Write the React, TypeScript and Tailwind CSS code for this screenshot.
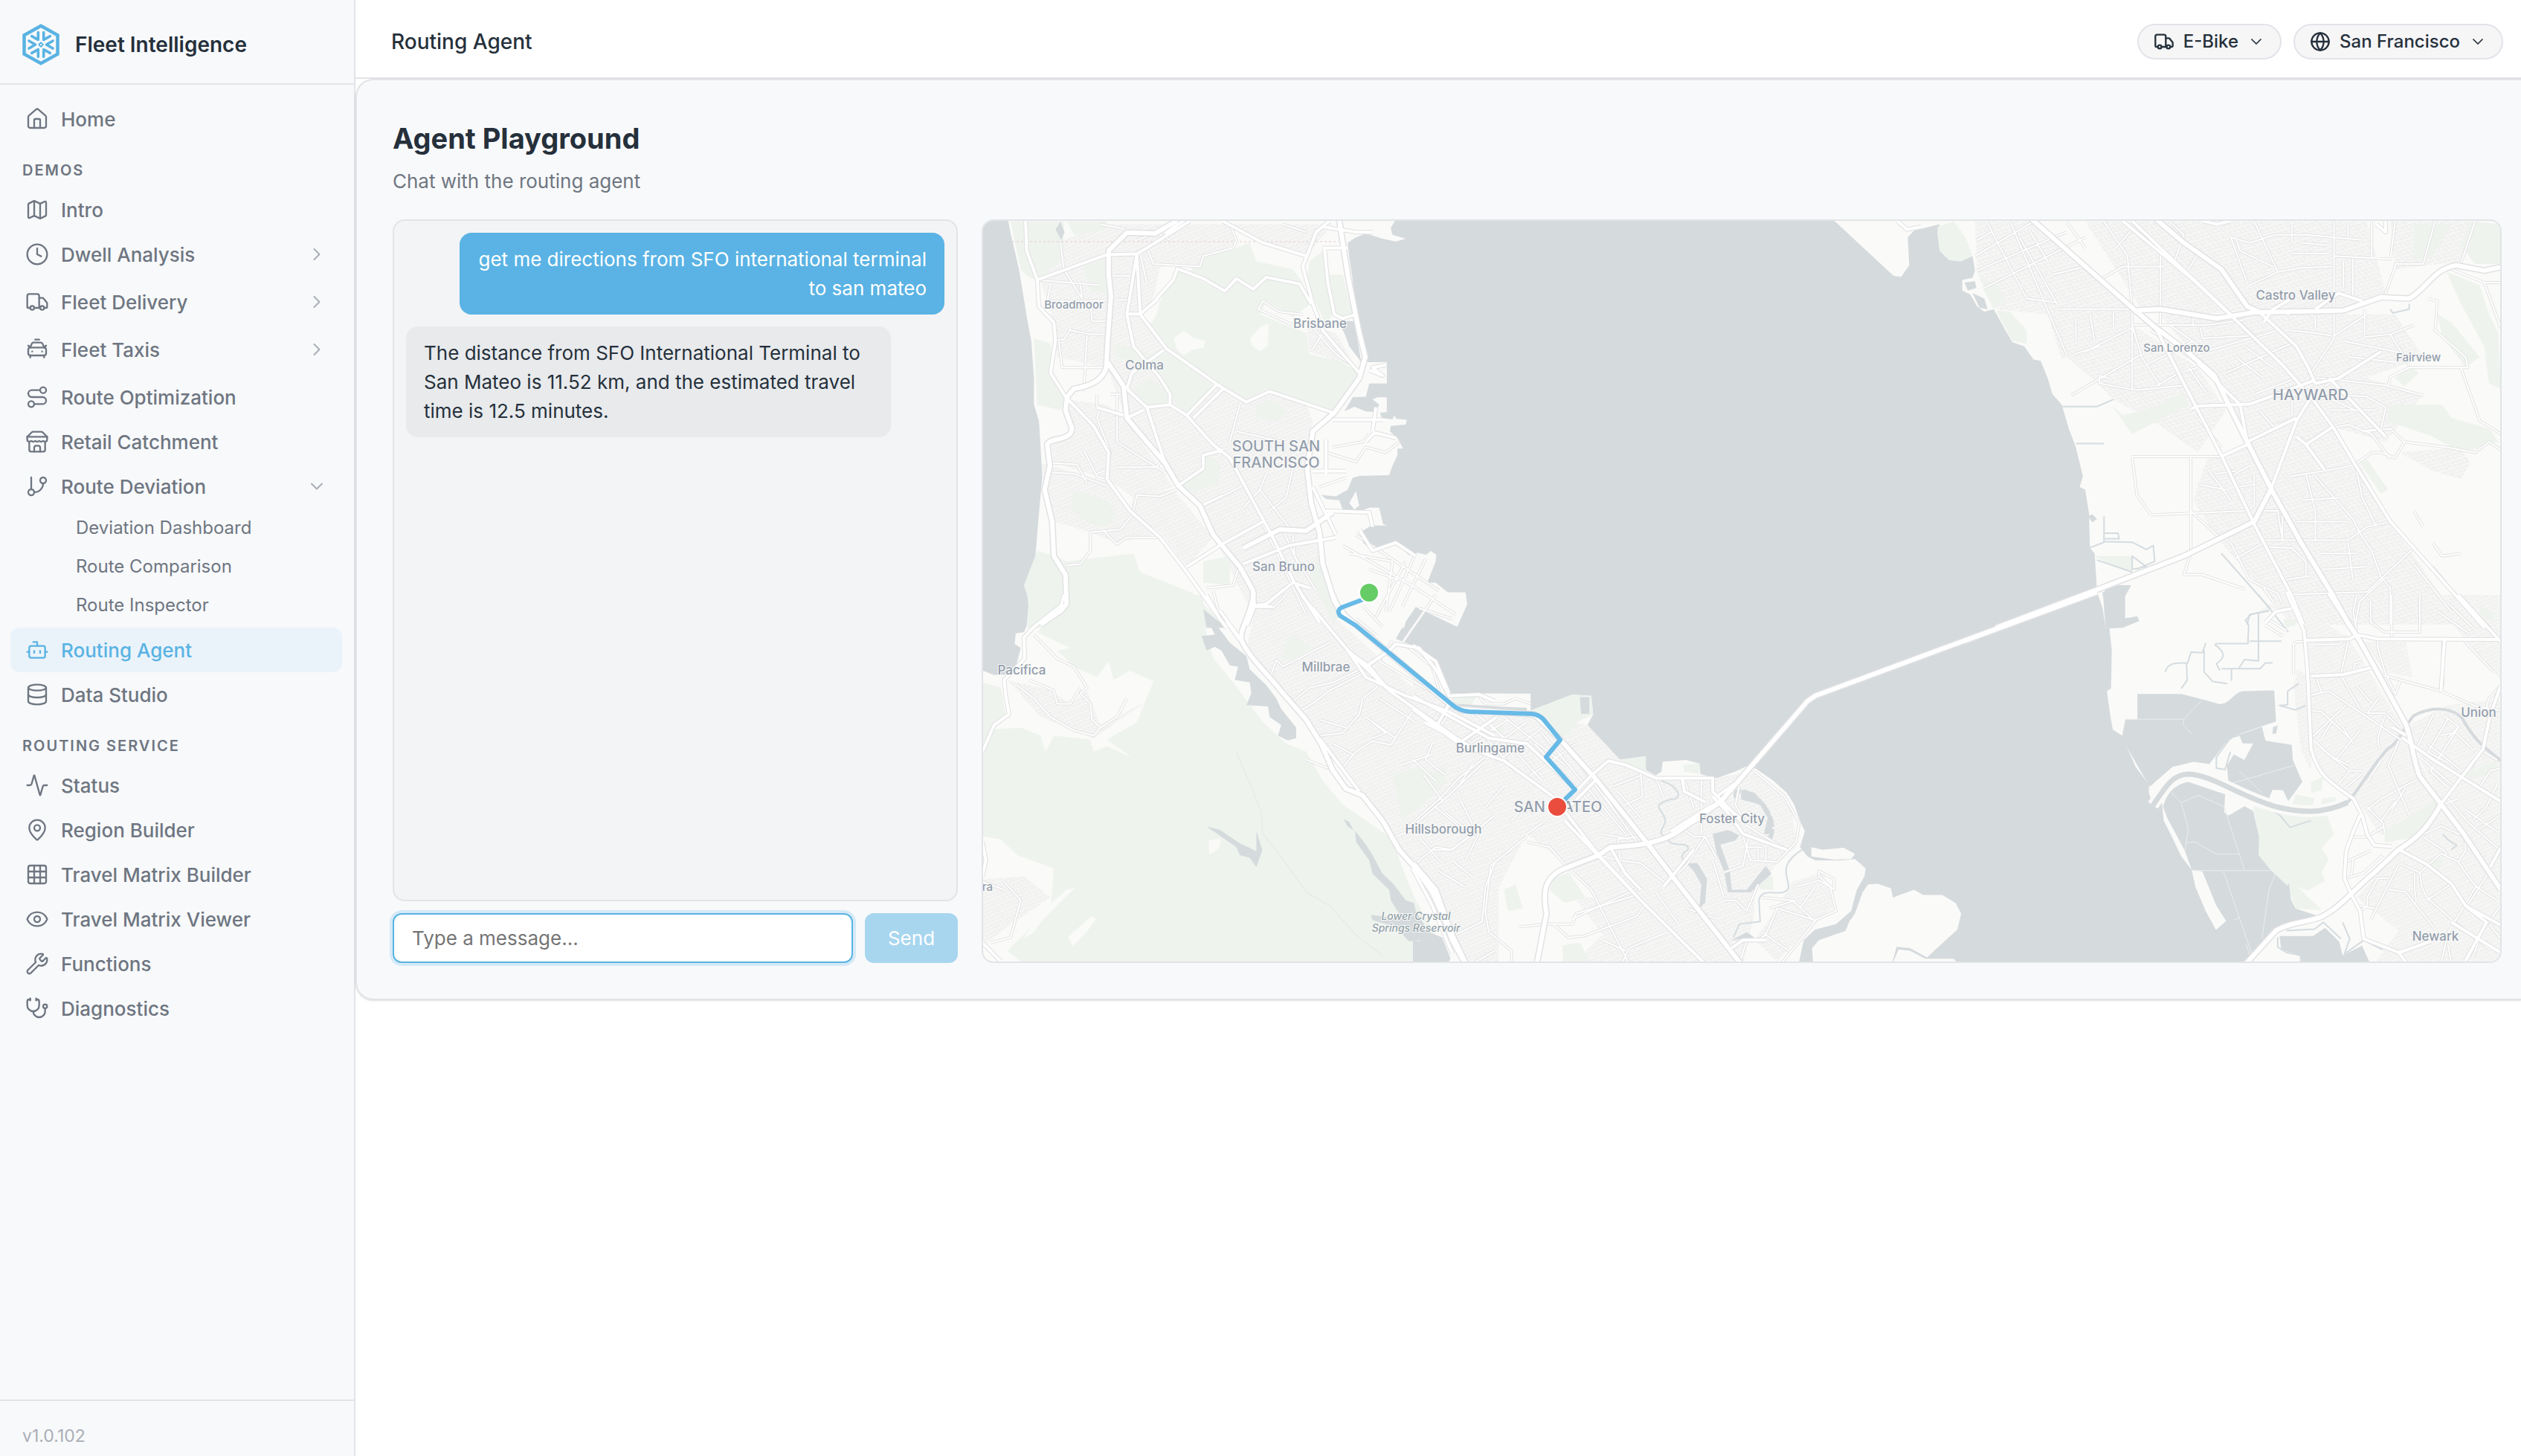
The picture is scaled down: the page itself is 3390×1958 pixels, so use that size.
import { useState, type FormEvent } from 'react';
import {
  Activity,
  Bot,
  CarTaxiFront,
  ChevronDown,
  ChevronRight,
  Clock,
  Database,
  Eye,
  Globe,
  Grid3x3,
  House,
  Map as MapIcon,
  MapPin,
  Route,
  Stethoscope,
  Truck,
  Wrench,
  createLucideIcon,
  type LucideIcon,
} from 'lucide-react';

interface NavItem {
  label: string;
  icon: LucideIcon;
  group?: boolean;
  children?: string[];
}

interface Message {
  role: 'user' | 'assistant';
  text: string;
}

const StoreFront = createLucideIcon('store-front', [
  ['path', { d: 'm2 7 4.41-4.41A2 2 0 0 1 7.83 2h8.34a2 2 0 0 1 1.42.59L22 7', key: 'roof' }],
  ['path', { d: 'M4 12v8a2 2 0 0 0 2 2h12a2 2 0 0 0 2-2v-8', key: 'walls' }],
  ['path', { d: 'M15 22v-4a2 2 0 0 0-2-2h-2a2 2 0 0 0-2 2v4', key: 'door' }],
  ['path', { d: 'M2 7h20', key: 'ledge' }],
  [
    'path',
    {
      d: 'M22 7v3a2 2 0 0 1-2 2a2.7 2.7 0 0 1-1.59-.63.7.7 0 0 0-.82 0A2.7 2.7 0 0 1 16 12a2.7 2.7 0 0 1-1.59-.63.7.7 0 0 0-.82 0A2.7 2.7 0 0 1 12 12a2.7 2.7 0 0 1-1.59-.63.7.7 0 0 0-.82 0A2.7 2.7 0 0 1 8 12a2.7 2.7 0 0 1-1.59-.63.7.7 0 0 0-.82 0A2.7 2.7 0 0 1 4 12a2 2 0 0 1-2-2V7',
      key: 'awning',
    },
  ],
]);

const Branch = createLucideIcon('branch', [
  ['path', { d: 'M6 3v12', key: 'trunk' }],
  ['circle', { cx: '18', cy: '6', r: '3', key: 'top' }],
  ['circle', { cx: '6', cy: '18', r: '3', key: 'bottom' }],
  ['path', { d: 'M18 9a9 9 0 0 1-9 9', key: 'curve' }],
]);

const demos: NavItem[] = [
  { label: 'Intro', icon: MapIcon },
  { label: 'Dwell Analysis', icon: Clock, group: true },
  { label: 'Fleet Delivery', icon: Truck, group: true },
  { label: 'Fleet Taxis', icon: CarTaxiFront, group: true },
  { label: 'Route Optimization', icon: Route },
  { label: 'Retail Catchment', icon: StoreFront },
  {
    label: 'Route Deviation',
    icon: Branch,
    group: true,
    children: ['Deviation Dashboard', 'Route Comparison', 'Route Inspector'],
  },
  { label: 'Routing Agent', icon: Bot },
  { label: 'Data Studio', icon: Database },
];

const services: NavItem[] = [
  { label: 'Status', icon: Activity },
  { label: 'Region Builder', icon: MapPin },
  { label: 'Travel Matrix Builder', icon: Grid3x3 },
  { label: 'Travel Matrix Viewer', icon: Eye },
  { label: 'Functions', icon: Wrench },
  { label: 'Diagnostics', icon: Stethoscope },
];

const initialMessages: Message[] = [
  { role: 'user', text: 'get me directions from SFO international terminal to san mateo' },
  {
    role: 'assistant',
    text: 'The distance from SFO International Terminal to San Mateo is 11.52 km, and the estimated travel time is 12.5 minutes.',
  },
];

function Logo() {
  return (
    <svg viewBox="0 0 56 56" className="size-14 shrink-0 text-[#59b3e3]" fill="none" stroke="currentColor" aria-hidden="true">
      <path d="M28 2.8 50.5 15.3V40.7L28 53.2 5.5 40.7V15.3Z" strokeWidth="4.5" />
      {[0, 60, 120, 180, 240, 300].map((angle) => (
        <path
          key={angle}
          d="M12 23 20.5 28 12 33"
          strokeWidth="3.6"
          strokeLinecap="round"
          strokeLinejoin="round"
          transform={`rotate(${angle} 28 28)`}
        />
      ))}
      <path d="M28 25.2 30.8 28 28 30.8 25.2 28Z" strokeWidth="1.8" strokeLinejoin="round" />
    </svg>
  );
}

function NavRow({ item, active }: { item: NavItem; active?: boolean }) {
  const Icon = item.icon;
  const [open, setOpen] = useState(Boolean(item.children));
  const Chevron = open ? ChevronDown : ChevronRight;

  if (item.group) {
    return (
      <div className="mb-1">
        <button
          type="button"
          aria-expanded={open}
          onClick={() => setOpen(!open)}
          className="flex h-[60px] w-full items-center gap-4 rounded-xl px-5 text-left text-[26px] font-medium text-[#6e7681]"
        >
          <Icon size={32} strokeWidth={1.75} className="shrink-0" />
          <span className="flex-1">{item.label}</span>
          <Chevron size={28} strokeWidth={1.75} className="shrink-0 text-[#a9aeb6]" />
        </button>
        {open &&
          item.children?.map((child) => (
            <a key={child} href="#" className="flex h-[52px] items-center pl-[88px] text-2xl text-[#6e7681]">
              {child}
            </a>
          ))}
      </div>
    );
  }

  return (
    <a
      href="#"
      aria-current={active ? 'page' : undefined}
      className={`flex h-[60px] items-center gap-4 rounded-xl px-5 text-[26px] font-medium ${
        active ? 'bg-[#ebf3fa] text-[#59b3e3]' : 'text-[#6e7681]'
      }`}
    >
      <Icon size={32} strokeWidth={1.75} className="shrink-0" />
      {item.label}
    </a>
  );
}

function NavHeading({ children }: { children: string }) {
  return (
    <h2 className="px-4 pt-[26px] pb-[10px] text-[20px] leading-[26px] font-semibold tracking-widest text-[#6e7681] uppercase">
      {children}
    </h2>
  );
}

function Sidebar() {
  return (
    <aside className="flex w-[478px] shrink-0 flex-col border-r-2 border-[#e2e4e7] bg-[#f8f9fb]">
      <div className="flex items-center gap-[18px] border-b-2 border-[#e2e4e7] px-[27px] pt-8 pb-6">
        <Logo />
        <span className="text-[28px] leading-9 font-semibold text-[#25303b]">Fleet Intelligence</span>
      </div>
      <nav className="flex-1 py-4 pr-4 pl-[14px]">
        <NavRow item={{ label: 'Home', icon: House }} />
        <NavHeading>Demos</NavHeading>
        {demos.map((item) => (
          <NavRow key={item.label} item={item} active={item.label === 'Routing Agent'} />
        ))}
        <NavHeading>Routing Service</NavHeading>
        {services.map((item) => (
          <NavRow key={item.label} item={item} />
        ))}
      </nav>
      <div className="border-t-2 border-[#e2e4e7] px-[30px] pt-8 pb-3 text-[23px] leading-[30px] text-[#a9aeb6]">v1.0.102</div>
    </aside>
  );
}

function PillSelect({ label, icon: Icon, options }: { label: string; icon: LucideIcon; options: string[] }) {
  return (
    <label className="flex h-12 items-center gap-3 rounded-full border-2 border-[#e2e4e9] bg-[#f6f6f7] px-5 text-[#25303b]">
      <Icon size={28} strokeWidth={2} />
      <select aria-label={label} className="field-sizing-content appearance-none bg-transparent text-2xl font-medium outline-none">
        {options.map((option) => (
          <option key={option}>{option}</option>
        ))}
      </select>
      <ChevronDown size={24} strokeWidth={1.75} />
    </label>
  );
}

interface Tile {
  transform: string;
  land: string[];
  urban: string[];
  parks: string[];
  water: string[];
  creeks?: string[];
  dikes?: string[];
  minor: string[];
  major: string[];
  highways: string[];
}

// Each tile keeps its own local grid, the transform places it on the map.
const tiles: Tile[] = [
  {
    transform: 'translate(1310 280) scale(.4464 .3571)',
    land: [
      'M100 30 108 85 135 230 160 420 172 500 180 640 180 740 195 800 200 900 205 1010 195 1150 185 1300 180 1380 150 1420 165 1470 158 1580H1295L1300 1556 1330 1501 1455 1576 1485 1490 1420 1440 1390 1410 1365 1410 1390 1330 1392 1305 1375 1290 1362 1305 1335 1297 1310 1307 1265 1252 1255 1270 1200 1290 1172 1260 1170 1215 1195 1195 1245 1195 1232 1190 1220 1128 1190 1128 1165 1140 1110 1135 1100 1100 1060 1095 1045 1080 1090 1085 1125 1060 1140 1015 1160 1008 1250 1005 1260 970 1275 930 1275 905 1292 905 1275 865 1252 840 1255 820 1300 815 1303 797 1272 793 1265 780 1260 795 1228 790 1222 770 1243 768V712H1215L1200 720 1220 740 1210 768 1180 765 1145 748 1115 765 1140 712 1180 710 1190 660 1243 660V580H1185L1170 560 1150 400 1140 270 1130 185 1125 130 1150 110 1180 95 1230 115 1270 125 1300 115 1260 100 1255 75 1275 30Z',
      'M1150 1065 1130 1110 1145 1135 1160 1120Z',
    ],
    urban: [
      'M220 140 400 60 780 60 790 130 680 210 560 220 540 340 500 400 600 500 750 680 850 720 900 680 1000 740 1020 800 1000 1000 1050 1300 1080 1560 850 1560 700 1180 600 1000 460 800 400 600 250 560 230 380 200 280Z',
      'M270 720 400 740 460 800 600 1050 480 1090 400 1020 240 960 230 860 290 850Z',
      'M205 960 400 1030 480 1150 540 1230 430 1260 350 1220 240 1180 210 1100Z',
      'M780 60 1080 60 1000 180 870 130Z',
      'M1000 440 1090 470 1150 600 1010 540Z',
      'M480 1080 600 1060 720 1240 640 1350 560 1220 470 1150Z',
    ],
    parks: [
      'M110 50H270V190L190 270 165 260 140 230Z',
      'M610 230 750 315 790 265 840 305 880 260 980 285 1015 360 960 410 880 350 860 400 1000 470 1010 550 1100 575 1160 620 1080 770 890 690 820 730 580 530 520 460 550 400 560 350Z',
      'M280 50 400 50 400 80 300 100Z',
      'M330 220 395 190 400 320 350 310Z',
      'M420 510 490 530 560 560 580 540 720 670 640 770 570 690 550 620 520 590 430 560Z',
      'M180 490 230 510 240 620 280 710 260 760 190 740Z',
      'M850 740 900 720 945 770 910 800 850 790Z',
      'M1010 200 1050 160 1060 280 1080 400 1060 440 1000 280Z',
      'M1062 250 1110 250 1140 400 1090 410Z',
      'M700 930 740 960 735 1040 640 1070 620 1040 680 990Z',
      'M300 1060 400 1100 430 1150 400 1200 350 1190 290 1130Z',
      'M280 1330 480 1300 500 1370 660 1450 760 1580 160 1580 165 1480 150 1420 190 1290 240 1310Z',
      'M1040 1290 1100 1540 1080 1560 1010 1380Z',
      'M680 190 790 150 830 130 850 200 960 230 990 280 880 255 830 300 790 260 750 310 650 240Z',
      'M470 690 530 640 580 700 580 740 520 750Z',
      'M690 1330 770 1310 770 1420 690 1410Z',
    ],
    water: ['M1095 425 1145 425 1166 580 1130 520 1115 470Z', 'M245 80 260 50 272 90 262 120Z', 'M690 1510 760 1580 700 1580Z'],
    minor: [
      'M190 270 380 290M230 290 220 350 340 350 410 345M260 130 270 230 325 340M255 500 265 600 400 600M290 460 350 475 405 475M350 350 355 425 405 425M415 255H470M430 345H465M240 495H270L290 455M320 290 325 340M340 480 330 690M410 700 450 700M370 700 370 750 430 770M430 700 430 880 580 1000M330 910 370 1010 400 1020M235 960 310 965 340 1035M230 995 300 1000 400 1045M430 975 550 975 570 940M370 1000 400 985 410 920 370 790 380 750',
      'M520 150 540 210 680 220 690 180 780 150 790 120 770 60M500 170 520 280M490 120 620 60M790 840 930 880M770 880 800 740M880 1000 860 1060 810 1130M960 980 940 1090 890 1140M860 1060 960 1220M810 1045 690 1120M680 1120 750 1080M480 1140 490 1080 560 1085 610 1060M350 1220 440 1210 480 1150M280 1345 320 1340 350 1290 350 1220 390 1215 430 1265 460 1240 560 1240M700 1430 780 1420 800 1340M720 1440 740 1540M1110 1270 1330 1430 1450 1530M1150 1230 1400 1440M1130 1300 1260 1330 1240 1520M1300 1330 1210 1540M1330 1300 1250 1520M1360 1320 1290 1500M1190 1360 1280 1400M1080 900 1170 880 1190 850M1040 1050 1120 1015M1060 920 1150 955 1180 900 1240 920 1280 880',
      'M870 350 855 380 960 440M870 350 920 390 990 400M1020 450 1090 550 1150 600M1050 470 1020 530M380 60 440 75 490 100M560 100 590 120M930 60 1000 90M870 1190 1000 1530M960 1230 965 1310 1030 1440M930 1210 990 1380',
    ],
    major: [
      'M155 48 158 160 190 270 195 370 240 430 245 500 230 620 275 710 360 820 405 920 400 1020 470 1140 560 1240 640 1370 760 1580M190 270 400 175 490 172M650 48 520 150 490 172 460 400 480 520 560 640 590 700 590 740 640 780 720 890 770 940 830 1080 900 1240 960 1400 1040 1560M490 172 500 400 580 530 740 670 820 730 890 690 1080 770M750 50 870 130 1000 180M1070 48 1030 90 990 220 1020 360 1050 460 1110 550 1160 620M1050 150H1125M1055 150 1065 280 1085 400 1110 415 1150 400M1050 70 1150 90 1200 90M460 398 500 398 550 345 550 340 600 270 612 228 690 265 755 312 790 265 840 305 880 260 980 285 1015 360M520 750 590 740M460 680 520 750 575 960M460 790 510 760M640 780 730 665M660 790 750 680M370 750 450 780M615 1045 690 980 690 930 750 910M1080 797 1230 797M1200 840 1210 750M1020 990H1120M1060 870 1060 1000M1180 880 1205 845 1270 865M740 1270 870 1180M810 1340 950 1270 1090 1240M640 1350 740 1270M1020 1050 1090 1230M1060 1140 1190 1145 1200 1200M830 1500 880 1490 960 1410 1010 1430M850 1500 900 1500M570 535 475 620 460 680M630 48 575 95',
      'M1160 1210 1200 1290 1270 1260 1330 1310M1190 610 1230 630 1200 600 1240 590',
    ],
    highways: [
      'M610 48 545 95 460 92 405 160 405 250 412 330 402 500 398 600C385 650 350 670 300 680L280 710 275 760 295 830C290 880 230 860 220 890L228 970 212 1060 235 1180 240 1310 275 1380 278 1490 262 1515 200 1568',
      'M402 580 450 670 460 790 520 880 575 960 615 1045 680 1120 720 1230 800 1350 840 1440 842 1500 820 1570',
      'M1098 30 1125 250 1160 470 1178 560 1160 640 1085 770 1020 840 1003 980 1015 1110 1040 1220 1050 1340 1085 1480 1120 1540',
      'M810 1280 920 1210 1000 1215 1040 1180 1080 1145',
    ],
  },
  {
    transform: 'translate(1310 800) scale(.4464 .3571)',
    land: [
      'M160-10 165 60 160 110 150 140 125 145 122 185 140 200 128 260 100 300 60 302 20 282V1400H1590V372H1430L1400 285 1385 275 1340 200 1270 165 1300 100 1330 45 1455 120 1485 35 1480-10Z',
    ],
    urban: [
      'M100 320 230 360 290 410 340 360 380 490 520 400 360 540 200 460Z',
      'M850 40 1000 0 1100 100 1400 440 1580 500 1580 1390 1480 1390 1400 1180 1320 1020 1240 850 1150 740 1040 540 930 370 820 200Z',
      'M20 1070 150 1060 230 1140 110 1240 40 1310 20 1300Z',
    ],
    parks: [
      'M165 0H690L690 100 720 240 780 330 870 480 940 560 1000 590 1050 700 1110 790 1180 850 1260 920 1290 1030 1330 1150 1400 1300V1400H160L100 1340 140 1290 230 1180 240 1030 130 980 80 920 25 910V510L140 500 200 530 215 590 240 530 350 545 360 590 400 570 475 612 400 545 490 480 540 325 470 285 420 320 405 250 370 310 300 270 250 210 290 200 190 140 270 40H190L165 60Z',
      'M25 330 80 350 95 450 60 480 25 560Z',
      'M930 190 960 150 1020 200 950 245 930 240Z',
      'M1260 680 1330 650 1430 700 1340 800 1290 850Z',
    ],
    water: [
      'M690 60 740 130 770 180 820 230 830 280 880 340 910 390 925 430 970 500 970 540 945 548 915 530 925 490 890 460 885 420 820 415 835 370 830 330 785 320 795 270 770 265 745 210 725 195 700 210 685 155 725 150Z',
      'M700 872 740 885 800 935 850 965 850 890 868 960 850 1025 830 990 800 980 790 950 750 915Z',
      'M1113 845 1130 855 1142 885 1125 872Z',
      'M1148 890 1180 940 1200 980 1230 1050 1260 1085 1300 1150 1325 1160 1330 1190 1370 1270 1410 1290 1435 1370 1420 1400H1390L1370 1330 1340 1300 1310 1305 1270 1250 1200 1225 1195 1205 1290 1220 1255 1150 1250 1110 1200 1050 1190 1000 1150 930Z',
      'M1455 410 1580 420V445L1480 440Z',
    ],
    minor: [
      'M180 150 250 240 300 270 340 350 320 370 350 410 355 470 380 500M165 320 240 360 250 410 290 410 320 350M130 340 180 390 230 460 300 510 360 530 380 500 430 460 460 390M90 1080 140 1150 110 1290 50 1310M25 1080 90 1110M1110 650 1150 590 1200 550 1255 565 1320 440M1045 530 1110 520 1160 450 1170 390 1220 340M960 400 1010 350 1080 330 1180 270M990 430 1030 400 1070 360 1180 290M895 300 910 245 930 270 1070 180M850 40 900 50 940 0M1310 870 1400 770 1460 690 1540 610M1330 1010 1390 950 1440 960 1568 830M1270 910 1330 880M1450 1280 1530 1230 1540 1100 1568 1010',
      'M1380 480 1420 400M1400 500 1440 430M1480 550 1568 460M1260 170 1220 250 1480 440M1300 190 1380 270 1400 360M1340 50 1440 90M1390 0 1290 180M1150 90 1210 150M1170 40 1230 120M1000 620 1080 660M1200 480 1240 520 1200 540M1500 1390 1568 1340',
      'M1380 560 1360 620 1420 680M1460 760 1500 860M1420 820 1480 880M1400 1040 1480 1100M1440 1000 1500 1060M1500 640 1460 720M1220 390 1330 480M1180 460 1270 540M1380 600 1290 640M1520 900 1480 1000M1080 560 1140 600M1040 470 1120 500',
    ],
    major: [
      'M985 0 1130 215 1190 270 1250 360 1470 555 1568 615M1020 50 1120 200 1180 310 1300 380 1430 440 1568 530M740 60 810 180M700 0 740 90M270 0 262 40 180 120M180 120 150 160 152 240 90 320 95 380 105 450 60 490 25 590M1180 270 1250 210 1270 185 1340 200 1390 280 1430 380 1520 375 1568 400M1250 360 1130 215M25 930 35 1000 25 1060M25 1310 80 1380',
      'M1040 540 1160 740M1320 1030 1380 1170 1440 1350M760 100 800 170',
    ],
    highways: [
      'M842-10C835 80 800 120 805 170 830 240 880 290 930 370L1000 470 1045 560 1080 660 1120 730 1170 755 1230 850 1280 960 1330 1030 1380 1120 1420 1230 1440 1300 1480 1390',
      'M1080 0 1100 60 1430 410 1480 440',
    ],
  },
  {
    transform: 'translate(1900 800) scale(.5102 .3571)',
    land: [
      'M0 190 40 220 65 280 95 372H310V435L335 430 375 400 420 375 470 380 475 450 460 490 545 620 612 608 614 660 640 680 655 665 658 628 720 622 755 635 758 675 800 690 850 665 880 645 905 655 950 700 985 745 1005 790 1020 850 1033 890 1020 950 1040 985 1060 1000 1130 1000 1165 995 1193 1030 1190 1060 1170 1110 1155 1190 1115 1240 1060 1260 1030 1300 1015 1400H0Z',
      'M1050 950 1080 960 1135 952 1165 975 1155 995 1110 997 1050 985Z',
      'M1200 1090 1225 1088 1260 1105 1265 1140 1320 1110 1345 1130 1395 1130 1430 1160 1445 1200 1435 1260 1355 1365 1310 1330 1275 1325 1260 1400H1055L1052 1330 1070 1300 1140 1265 1150 1230 1165 1200 1185 1120Z',
      'M1280 1335 1310 1340 1350 1370 1425 1370 1445 1400H1260Z',
    ],
    urban: [
      'M0 290 150 440 320 450 460 490 545 620 640 690 800 690 900 660 1000 800 1010 950 960 1010 900 1120 900 1200 870 1390 560 1390 520 1200 420 1030 300 900 190 1200 0 1000Z',
      'M1000 1080 1080 1040 1115 1170 1060 1230 960 1380 900 1300 960 1180Z',
      'M420 1130 560 1160 640 1390 420 1390 500 1280Z',
    ],
    parks: [
      'M310 435 420 375 470 380 475 450 430 480 410 530 380 530Z',
      'M548 620 614 610V660L580 660Z',
      'M712 640 755 635V675L715 665Z',
      'M370 1070 410 1045 455 1140 400 1160 360 1110Z',
      'M240 1110 270 1090 290 1180 250 1190Z',
      'M395 1320 440 1310 470 1390H395Z',
      'M910 1060 950 1060 950 1110 915 1110Z',
      'M210 500 240 490 240 520 215 520Z',
      'M0 700 90 640 80 710 0 760Z',
      'M105 380H170L150 420 100 410Z',
    ],
    water: [
      'M440 385H465V448H443Z',
      'M120 415 300 425V440L130 435Z',
      'M790 900 830 885 860 905 850 925 810 940 835 1040 840 1110 880 1110 930 1020 945 1050 890 1120 830 1120 820 1040 800 970Z',
      'M865 735 900 745 930 790 950 850 945 900 925 900 935 840 915 790 865 770Z',
      'M0 1300 40 1310 60 1350 90 1360V1400H0Z',
      'M720 1010 750 1010 775 1070 770 1160 755 1180 760 1090 740 1040Z',
      'M840 1300 880 1270 900 1290Z',
    ],
    creeks: [
      'M655 700C700 720 715 770 680 770 630 790 650 800 660 830 680 870 630 890 670 915 680 960 730 920 725 960 690 990 720 1000 735 1030',
      'M1025 960C960 1020 990 1060 990 1100 980 1150 920 1090 912 1150L915 1230 860 1240 845 1290',
    ],
    minor: [
      'M640 690 660 760M715 690 725 740 740 800M760 690 760 900M600 670 605 760 560 790M530 720 600 680M540 740 600 840M860 720 850 790 880 870 985 960M870 910 890 1000 960 1005 1010 930 1018 860 980 760 900 665M820 1045 870 1020 885 910M820 1150 850 1150 880 1190 910 1090M770 910 720 1020 660 1100M790 1000 820 1140M700 870 740 910 770 910 800 990M920 1140 1000 1150 1060 1230 970 1390M940 1180 1010 1150M1010 1100 1070 1075 1100 1100 1115 1190 1060 1225 960 1180 930 1280 910 1300 840 1310M920 1270 990 1340M1070 1040 1110 1070 1110 1110 1070 1060ZM430 870 490 980M300 930 360 950 410 1030 470 1110 520 1250 570 1390M190 1200 205 1020 300 910M190 1190 200 1270 260 1340 260 1390M280 1250 350 1240 420 1240 430 1200 590 1130M370 1240 410 1290 450 1285 590 1210 610 1170M550 1390 570 1330 670 1270M490 980 540 1000 600 1010 670 1090M550 1050 540 920 600 910M500 900 570 920M480 690 530 810 600 950M400 560 540 830M340 520 560 900M320 560 500 830',
      'M240 460 400 640M200 480 340 700M160 440 260 560M150 560 250 470M180 600 300 480M230 620 360 480M300 690 430 560M250 630 180 520M100 380 170 376 190 410 240 410 270 390 310 410M0 870 90 760 180 640M50 960 100 960 160 900 190 860M1060 1100 1020 1180M720 1180 800 1220M860 1390 880 1300M420 1220 600 1100M640 1120 700 1240M500 1300 560 1340M920 950 880 950M910 960V1000M930 950V1000M0 620 60 700M30 680 80 780M60 800 120 870M20 920 70 1000M240 720 190 800M310 770 260 850M350 850 300 900',
    ],
    major: [
      'M0 430 120 560 240 625 370 760 490 980 600 1150 770 1390M0 380 200 540 300 560 420 720M400 850 600 1150M470 680 515 625 560 640 640 690 790 690 790 740 870 860M470 680 430 740 390 790M480 700 390 830M680 890 780 800 810 780M790 760 830 820 870 900 985 960M810 780 870 850M0 190 60 250 95 370M30 480 150 570M60 500 100 400M120 560 220 460',
      'M710 690 715 740 770 780M670 910 760 840M840 1330 870 1300 930 1300M740 960 660 1100M520 950 560 1050 600 1110M860 700 800 760',
    ],
    highways: [
      'M120 430 320 450 385 540 480 690 620 940 700 1090 870 1400',
      'M1590 100 1060 380 1040 400 810 780 700 890C660 930 600 945 520 950L490 980 400 1030C350 1060 340 1110 352 1200L325 1400',
      'M0 1010 60 1110 100 1270 140 1390',
    ],
  },
  {
    transform: 'translate(2400 280) scale(.6313 .3571)',
    land: [
      'M95 30 232 255 248 258 265 215 262 110 275 85 330 60 325 90 330 160 350 195 375 200 400 180 405 235 400 262 378 270V310L395 325 410 370 425 390 445 380 470 460 485 505 510 520 530 570 545 575 560 640 570 700 590 740 605 830 620 900 635 1010 628 1050 640 1060 648 1150 650 1280 660 1300 665 1440 675 1480 683 1580H1540V30Z',
    ],
    urban: [
      'M405 50 530 50 740 390 740 440 640 540 590 570 560 400 450 380 410 250Z',
      'M600 560 740 440 880 600 940 760 880 920 800 820 700 720 660 650Z',
      'M640 50 1240 50 1280 320 1200 380 990 380 900 400 760 380Z',
      'M800 400 1000 400 1300 400 1360 560 1240 640 1360 700 1280 880 1160 820 1230 980 1290 1180 1440 1568 1080 1568 920 1240 870 1100 900 940 985 900 930 680Z',
      'M1290 50 1480 50 1440 200 1300 230Z',
      'M1310 920 1440 900 1460 960 1440 1020 1380 990Z',
    ],
    parks: [
      'M325 70 360 50 385 110 400 180 375 200 350 195 330 160Z',
      'M695 740 720 780 790 750 850 690 860 740 740 850Z',
      'M450 385 480 390 515 460 515 510 485 500Z',
      'M415 250 450 290 470 340 445 380 425 310Z',
      'M1410 240 1480 290 1500 400 1520 470 1525 680 1500 660 1490 520 1440 360Z',
      'M1290 740 1400 740 1420 790 1500 830 1520 880 1440 920 1380 860 1280 800Z',
      'M1300 640 1330 590 1350 620 1320 670Z',
      'M1225 960 1240 945 1285 1060 1270 1075Z',
      'M1340 60 1420 60 1380 180 1340 200Z',
      'M1460 50 1525 60V210L1470 210 1440 140Z',
      'M660 1310H740V1370L700 1350Z',
      'M1390 400 1420 430 1480 560 1450 600 1400 480Z',
    ],
    water: [
      'M383 280 405 275 408 300 390 310Z',
      'M400 320 425 340 432 380 415 375Z',
      'M678 1450 690 1420 738 1420 722 1470 722 1580H683Z',
      'M646 1160 655 1152 665 1170 655 1183Z',
    ],
    creeks: [
      'M590 747H665L700 720M620 886H680M680 1160 680 1255 740 1258 770 1285 785 1270 788 1330 750 1360M680 1224H710L712 1245H682M640 1285 680 1258M665 1325 740 1370M740 1310V1360L770 1350ZM985 1568 990 1530 1030 1515M930 1300 1000 1440 1035 1510M1290 380 1295 395 1330 380 1330 360',
    ],
    minor: [
      'M405 180 530 50M410 235 600 90M425 300 640 110M410 120 440 90M430 50 515 340 580 355M480 50 600 550M500 110 580 360M520 80 560 200M600 50 640 150M585 380H740M740 400 740 680M670 270 720 220 810 220M680 50 730 180 740 380M800 140V440M740 440H900L980 420M870 380V440M690 640 670 630 670 660 750 685 850 668M640 540 740 450M615 550 670 520M610 705 760 550M770 590 870 500M790 670 840 620 880 600M800 670 760 560 740 440M705 150 740 80M830 200 850 100 820 50M860 230 880 170M870 270 1000 480M885 450 890 490 990 480M895 540 1050 460M940 620 1090 500M1000 700 1090 640M1010 760 1040 820 1090 790M1080 710 1080 780M1130 460 1130 410 1110 390M1170 50V390M1170 180 1290 192 1300 50M1250 50 1250 190M1045 100H1110L1230 120M1050 240 1100 225 1165 220M990 290 1050 240 1000 50M960 110 970 160 1040 220M950 110 990 130 1045 100M985 280 950 110M1075 460 1130 470 1165 480M1170 390 1170 490 1110 650M1235 380 1235 480M1170 480 1240 400M1235 485 1290 475 1340 440M1290 475 1330 590M1300 230 1300 210 1360 210 1385 50M1440 210 1470 50M1280 320 1300 220M1370 340 1390 350 1385 460 1450 560 1455 600 1330 600 1290 635 1285 670M1285 668 1170 645 1130 640M1150 670 1180 640M1285 670 1360 705M1200 705 1240 710 1280 750 1270 830 1230 840M1440 600 1480 800 1525 850',
      'M740 935H930M740 935 750 1080 780 1155M865 935V1140L925 1240M780 1155 980 1140M865 1140V1300L850 1380 890 1380 980 1435M1020 1140 1050 1140 1060 1250M1075 1010 1180 980 1215 965M1110 1000 1130 1140 1130 1250M1130 1010 1210 1170 1225 1220M1215 960 1230 1090 1260 1200M1025 1250H1200L1240 1200 1290 1180M960 1320 1020 1260M1020 1275 1080 1280 1110 1330 1110 1390M1065 1400 1120 1385M1080 1455 1240 1445 1340 1280M1220 1210 1250 1290 1270 1390 1290 1430V1568M1060 1490 1050 1450 990 1400 950 1260M1040 1480 1020 1430M1215 1568 1225 1480 1280 1390M1240 840 1290 830 1320 880 1300 940 1270 920 1250 920 1215 965M1320 880 1410 900 1470 920 1500 880 1525 910M1160 830 1200 815 1250 850M1250 850 1290 945M920 1000 960 990M950 1010 990 970M965 1050 1000 1040M990 1130 1000 1120 1000 1000M880 790 930 900M1060 1140 1060 1240M1420 230 1490 280 1525 280M1490 280 1525 450',
      'M570 250 640 220 660 260M620 420 620 500M650 400 660 500M700 390 700 450M780 460 860 560M820 440 900 540M860 600 900 700M960 560 1020 640M980 520 1040 600M900 980 950 1100M880 1040 940 1060M1100 1100 1180 1090M1090 1180 1200 1180M1140 1300 1220 1300M1150 1360 1240 1350M1120 1320 1150 1420M1200 1260 1210 1400M1340 1140 1360 1200M1380 1260 1400 1310 1440 1300M1340 1340 1420 1520M1380 1350 1440 1480M1140 700 1240 780M1160 760 1260 760M1190 500 1300 540M1200 560 1300 580M1100 130 1160 140M1080 60 1080 130M1200 60V110M1190 200V300M1210 190V340M1080 170 1160 170',
    ],
    major: [
      'M720 48 870 270 960 420 1060 590 1125 720 1170 830 1220 980 1290 1180 1490 1580M790 450 850 660 930 930 1000 1190 1080 1460 1105 1568M865 755 880 745 990 738 1125 650M985 880 1090 790M930 935 985 890M1035 1060 1090 800 1125 700M740 48 800 150 950 400M880 585 970 740 985 880M1010 390 1090 520 1115 600 1130 660 1180 640 1270 540M1020 430 1040 380 1080 340M1065 390 1075 400M1090 860 1110 890 1170 820M1110 890 1150 985M1160 640 1280 860M1130 380 1180 320 1230 350',
      'M240 48 260 80 290 70M1260 60 1280 90 1280 48M890 48 920 60 950 48',
    ],
    highways: [
      'M525 40 660 250 750 390 790 450 850 530 915 630 940 720 985 880 1040 1070 1100 1260 1165 1450 1205 1580',
      'M790 40 850 130 930 230 985 370 1010 390',
      'M750 385 800 380 920 415 1000 392 1130 388 1190 385 1270 335 1330 340C1370 300 1380 230 1430 215L1490 235 1530 220',
      'M450 1580 660 1440 850 1310 1000 1180 1035 1060',
    ],
  },
  {
    transform: 'translate(2650 800) scale(.4719 .37)',
    land: [
      'M360-10 395 120 402 200 400 340 388 350 398 440 405 490 430 510 470 625 508 690V720L520 765 545 755 550 820 570 870 600 950 630 1000 640 1060 670 1150 700 1220 712 1345H1530V-10Z',
    ],
    urban: [
      'M820 60 900 40 950 130 960 300 970 560 1000 650 1120 780 1160 860 1200 900 1340 760 1240 500 1080 160 960 60 900 0Z',
      'M930 270 970 300 970 640 940 560 920 340Z',
      'M1240 480 1360 400 1510 380V1340H1150L1220 1220 1100 1100 1220 930 1340 760Z',
      'M1300 0 1510 0V310L1410 160Z',
      'M1120 170 1240 170 1260 300 1180 280Z',
    ],
    parks: [
      'M805 768 870 790 960 800 1015 800 1035 870 1000 920 1020 960 1000 1010 1010 1040 960 1075 930 1060 1000 1145 925 1140 905 1060 855 1000 820 945 822 880Z',
      'M1180 860 1320 750 1335 770 1270 880 1180 900Z',
      'M970 680 1005 660 1000 710 970 720Z',
      'M925 725 980 740 970 780 915 770Z',
      'M1000 740 1040 735V765L1000 770Z',
      'M1410 650 1500 600V640L1420 670Z',
      'M890 90 930 85 925 110 900 120Z',
      'M1450 40 1490 70 1490 100 1450 70Z',
      'M1300 960 1350 960 1330 1010Z',
    ],
    water: [
      'M375-10H440V85L475 78 480 95 435 118 393 122Z',
      'M475 360H600L660 380 710 397C740 395 750 355 775 350L865 347 870 460 760 508 725 540 680 615 635 607 575 625 510 697 430 520 441 452H475Z',
      'M765 508 830 480 840 530 915 545 918 600 945 680 905 750 890 710 860 708 850 740 835 740 735 685 730 620 750 580 780 600 805 540 775 540Z',
      'M548 770C560 720 580 690 620 680L725 725 722 790 735 802 780 768 805 785 822 880 820 945 855 1000 905 1060 910 1100 925 1140 985 1165 900 1200 860 1220 790 1345H712L697 1220 728 1185 700 1130 660 1005 630 1000 610 930 560 810Z',
      'M880 1240H975L1010 1210 1050 1260 1060 1310 1115 1275 1140 1345H945L940 1310 885 1290Z',
      'M862 480 875 475 870 505 860 505Z',
    ],
    creeks: [
      'M555 280C560 250 580 245 615 248L617 310 600 340M617 250 628 208 660 210 670 175M665 200V280L690 315 730 322M695 180C740 220 710 240 700 250L710 275M697 177H790L792 110 783 92 800 70 850 58M820 65V240L780 235 765 265M715 268H825L840 247 860 247M743 270V312M795 168H885M905 135 820 0M935 322 903 350V400L880 402 925 418 955 402M770 508 740 520 700 590 700 630 725 635 740 570M860 785 880 800 910 845 970 820M875 1245V1280L900 1300 940 1310V1335M900 1220 980 1215 1005 1190 1055 1250M1060 1190 1080 1250 1065 1305 1120 1255 1175 1290M905 1050 915 1150 980 1168M1345 870 1360 890 1385 910 1370 925',
    ],
    dikes: [
      'M441 452H608L660 380M608 450 605 470 630 505M730 690 840 650 920 620M765 640 830 720M570 715 600 755 620 850 610 935M600 755 648 728 722 770 780 1000M610 900 640 898 700 942H765M630 1002H860M720 1005 800 1300M850 1070 870 1010M850 1070 830 1250M765 1175 750 1180M785 1270 795 1310',
    ],
    minor: [
      'M920 180 930 170 950 170M920 180V290M1140 20V100L1180 135H1280V0M1345 165V330L1330 350M1200 0V160M980 180 1050 180 1075 150M1075 170 1055 290 1080 350 1110 415M970 295H1050L1140 265M970 365 1020 350 1090 410 1230 530M985 300 1000 355M970 420 1000 425 1080 520M970 520 1040 600M1030 460 1000 520M1070 400 970 520M1110 490 1040 600 1080 640 1115 640M1040 700 1080 640M970 520 1020 580 1075 620M1115 650 1060 710M1220 530 1190 620 1230 740 1250 800M1130 780 1170 740 1280 665M1130 770 1175 830 1180 865M1140 870 1175 845M1180 440 1160 520 1165 560M1165 370 1130 430 1180 430 1220 480M1160 160 1160 190 1180 280 1210 360 1225 310M1090 280 1095 250 1110 245M1100 0 1090 60 1100 130M1170 290 1340 350 1440 405 1510 420M1405 165 1490 280M1510 330 1475 380 1470 410M1320 430 1270 560M1360 450 1300 580M1390 480 1310 640 1360 700M1280 590 1380 700M1300 570 1360 610M1300 540 1400 640M1340 510 1380 500 1430 560M1350 440 1390 480 1360 520M1430 590 1450 560 1500 600M1420 640 1440 600M1440 720 1480 640 1510 630M1360 740 1420 830 1510 930M1410 780 1500 860M1430 820 1470 770 1500 690',
      'M1290 870 1340 840 1410 880 1410 930 1390 970M1290 880 1350 930 1355 945M1230 980 1280 1010 1340 940 1390 970 1410 1010 1440 1060 1500 1110M1280 1010 1285 1060 1300 1100 1370 1180 1480 1290M1370 1050 1300 1110M1265 1010 1265 1070 1270 1120M1220 980 1140 1180M1190 1070 1240 1080 1320 1210M1110 1150 1130 1130 1130 1100 1160 1030 1190 1030M1070 1030 1120 1010 1175 945M1070 970 1140 930M1090 960 1085 1020M1080 880 1130 880 1140 870M1150 1140 1110 1130M1360 1270 1370 1340M1340 1340 1355 1260M1440 1060 1340 1270M1480 1000 1410 1140M1510 1130 1470 1200M1430 1320 1450 1250M1480 1200 1510 1250M1390 740 1330 770M1450 850 1510 800M1210 750 1170 820M1240 700 1200 780M1170 600 1130 680M1060 480 1090 540M1100 330 1140 390M850 90 900 130M840 110 890 150M1330 60 1420 140M1360 30 1440 130M1400 20 1480 120',
    ],
    major: [
      'M900-10 950 130 960 280 970 560C990 650 1010 670 1090 740L1115 800 1130 870 1150 910 1200 915M955 165 1080 160 1100 145 1160 160 1505 162M1390 0 1510 170M1230 520 1320 600 1510 750M1070 930 1090 860 1110 800M1070 930 1065 1030 1085 1090 1110 1150 1120 1250 1220 1300 1310 1260M1220 925 1300 980 1370 1050 1410 1130 1510 1200M1340 760 1400 660 1460 560 1480 440 1510 330M1220 1300 1240 1335M1410 1130 1470 1190 1410 1330M1370 1190 1510 1300M1340 350 1350 165M840 100 870 60 915 50M1480 990 1510 920',
      'M1140 265 1060 290 970 295M1240 510 1200 480',
    ],
    highways: [
      'M1020-10 1110 170 1150 260 1240 470C1260 540 1260 600 1280 660L1400 860 1510 1070',
      'M785 1340 870 1220C910 1190 960 1190 1000 1170 1060 1130 1100 1060 1150 1010L1220 925C1280 880 1310 830 1340 760',
      'M-20 168 360-10',
    ],
  },
];

const cityLabels = [
  { x: 1444, y: 415, size: 15, name: 'Broadmoor' },
  { x: 1775, y: 441, size: 17, name: 'Brisbane' },
  { x: 1539, y: 497, size: 17, name: 'Colma' },
  { x: 1716, y: 607, size: 20, name: 'SOUTH SAN' },
  { x: 1716, y: 629, size: 20, name: 'FRANCISCO' },
  { x: 1726, y: 768, size: 17, name: 'San Bruno' },
  { x: 1374, y: 907, size: 17, name: 'Pacifica' },
  { x: 1783, y: 903, size: 17, name: 'Millbrae' },
  { x: 2004, y: 1012, size: 17, name: 'Burlingame' },
  { x: 1941, y: 1121, size: 17, name: 'Hillsborough' },
  { x: 2095, y: 1092, size: 20, name: 'SAN MATEO' },
  { x: 2329, y: 1107, size: 17, name: 'Foster City' },
  { x: 3087, y: 403, size: 17, name: 'Castro Valley' },
  { x: 2927, y: 473, size: 15, name: 'San Lorenzo' },
  { x: 3252, y: 486, size: 15, name: 'Fairview' },
  { x: 3107, y: 538, size: 20, name: 'HAYWARD' },
  { x: 3333, y: 964, size: 17, name: 'Union' },
  { x: 3275, y: 1265, size: 17, name: 'Newark' },
  { x: 1328, y: 1198, size: 15, name: 'ra' },
];

function TileLayer({
  paths,
  fill = 'none',
  stroke,
  width,
}: {
  paths: (tile: Tile) => string[] | undefined;
  fill?: string;
  stroke?: string;
  width?: number;
}) {
  return (
    <>
      {tiles.map((tile) => (
        <g key={tile.transform} transform={tile.transform} fill={fill} stroke={stroke} strokeWidth={width}>
          {paths(tile)?.map((d) => (
            <path key={d} d={d} vectorEffect="non-scaling-stroke" strokeLinejoin="round" />
          ))}
        </g>
      ))}
    </>
  );
}

function RouteMap() {
  return (
    <svg viewBox="1322 297 2040 996" preserveAspectRatio="xMidYMid slice" className="block size-full" role="img" aria-label="Route map">
      <defs>
        <pattern id="streets" width="32" height="26" patternUnits="userSpaceOnUse" patternTransform="rotate(-28)">
          <rect width="32" height="26" fill="#f6f6f5" />
          <path d="M0 5H32M0 18H32M6 0V18M17 5V26M26 0V18" stroke="#ededed" strokeWidth="2" fill="none" />
        </pattern>
      </defs>
      <rect x="1322" y="297" width="2040" height="996" fill="#d5dadd" />
      <TileLayer paths={(t) => t.land} fill="#fafaf8" />
      <TileLayer paths={(t) => t.urban} fill="url(#streets)" />
      <TileLayer paths={(t) => t.parks} fill="#eef3ee" />
      <TileLayer paths={(t) => t.water} fill="#d5dadd" />
      <TileLayer paths={(t) => t.creeks} stroke="#d5dce0" width={2} />
      <TileLayer paths={(t) => t.dikes} stroke="#eceeed" width={1} />
      {/* Old Alameda / Coyote creek channels */}
      <g fill="none" strokeLinejoin="round">
        <path d="M2895 1083C2914 1055 2923 1041 2943 1041C2975 1042 3009 1070 3061 1085C3089 1092 3122 1096 3157 1079" stroke="#fafaf8" strokeWidth="16" />
        <path d="M2895 1083C2914 1055 2923 1041 2943 1041C2975 1042 3009 1070 3061 1085C3089 1092 3122 1096 3157 1079" stroke="#d5dadd" strokeWidth="7" />
        <path d="M3157 1079C3174 1059 3193 1025 3211 1007C3226 998 3231 981 3245 963C3268 950 3296 950 3311 966C3330 1000 3344 1007 3364 1024" stroke="#d5dadd" strokeWidth="4" />
        <path d="M2335 1073C2330 1060 2345 1062 2360 1072C2380 1090 2388 1110 2380 1128" stroke="#d5dadd" strokeWidth="6" strokeDasharray="14 3" />
      </g>
      {/* Bare hills */}
      <path
        d="M1578 455 1592 445 1606 455 1621 458 1618 468 1604 470 1592 478 1583 470ZM1681 455 1694 440 1706 435 1705 465 1695 472 1684 466ZM1625 1130 1642 1128 1640 1140 1626 1150ZM1443 1273 1462 1252 1474 1236 1468 1232 1436 1260ZM1376 1262 1390 1254 1400 1240 1424 1215 1446 1194 1434 1196 1400 1228Z"
        fill="#fafaf8"
      />
      <path d="M1361 325H1800" stroke="#ecd9da" strokeWidth="1.5" strokeDasharray="3 3" />
      <path
        d="M1662 1010 1685 1064 1696 1092 1698 1121 1721 1150 1757 1200 1788 1218 1823 1257 1860 1286"
        fill="none"
        stroke="#e8ebe8"
        strokeWidth="1.5"
      />
      <TileLayer paths={(t) => t.minor} stroke="#e3e3e4" width={4} />
      <TileLayer paths={(t) => t.minor} stroke="#ffffff" width={2} />
      <TileLayer paths={(t) => t.major} stroke="#e0e0e2" width={6} />
      <TileLayer paths={(t) => t.highways} stroke="#e2e2e4" width={9} />
      <TileLayer paths={(t) => t.major} stroke="#ffffff" width={4} />
      <TileLayer paths={(t) => t.highways} stroke="#ffffff" width={6} />

      <g
        fill="#929dac"
        stroke="#fafaf8"
        strokeWidth="2"
        paintOrder="stroke"
        textAnchor="middle"
        className="font-['Inter',sans-serif] font-medium"
      >
        {cityLabels.map((label) => (
          <text key={label.name} x={label.x} y={label.y} fontSize={label.size}>
            {label.name}
          </text>
        ))}
        <g fontSize="14" fontStyle="italic" fill="#92a2a9">
          <text x="1904" y="1237">
            Lower Crystal
          </text>
          <text x="1904" y="1253">
            Springs Reservoir
          </text>
        </g>
      </g>

      <path
        d="M1841 803 1804 817Q1797 821 1802 828L1823 841 1953 948Q1963 956 1976 957L2060 960Q2070 961 2076 968L2098 995 2079 1018 2118 1062 2094 1085"
        fill="none"
        stroke="#5bb4e5"
        strokeOpacity=".92"
        strokeWidth="6"
        strokeLinejoin="round"
      />
      <circle cx="1841" cy="797" r="13" fill="#66cc66" stroke="#ffffff" strokeWidth="2" />
      <circle cx="2094" cy="1085" r="13" fill="#ea4d3d" stroke="#ffffff" strokeWidth="2" />
    </svg>
  );
}

function ChatPanel() {
  const [messages, setMessages] = useState(initialMessages);
  const [draft, setDraft] = useState('');

  const handleSubmit = (e: FormEvent) => {
    e.preventDefault();
    if (!draft.trim()) return;
    setMessages([...messages, { role: 'user', text: draft }]);
    setDraft('');
  };

  return (
    <section className="flex flex-col gap-4" aria-label="Chat">
      <div className="flex flex-1 flex-col gap-4 rounded-2xl border-2 border-[#e2e4e7] bg-[#f3f4f6] p-4">
        {messages.map((message, i) => (
          <p
            key={i}
            className={`w-[90%] rounded-2xl px-6 py-4 text-[26px] leading-[39px] ${
              message.role === 'user' ? 'self-end bg-[#5ab3e4] text-right text-white' : 'bg-[#e8eaec] text-[#25303b]'
            }`}
          >
            {message.text}
          </p>
        ))}
      </div>
      <form onSubmit={handleSubmit} className="flex gap-4">
        <input
          type="text"
          aria-label="Message"
          placeholder="Type a message..."
          value={draft}
          onChange={(e) => setDraft(e.target.value)}
          className="min-w-0 flex-1 rounded-xl border-2 border-[#59b3e3] bg-white px-6 py-3 text-[26px] leading-[39px] text-[#25303b] ring-4 ring-[#d6e9f6] outline-none placeholder:text-[#757575]"
        />
        <button
          type="submit"
          disabled={!draft.trim()}
          className="w-[125px] rounded-xl bg-[#59b3e3] text-[26px] leading-[39px] text-white disabled:bg-[#a8d6ef]"
        >
          Send
        </button>
      </form>
    </section>
  );
}

export default function App() {
  return (
    <div className="flex min-h-screen bg-white font-['Inter',sans-serif] antialiased">
      <Sidebar />
      <div className="flex min-w-0 flex-1 flex-col">
        <header className="flex items-center gap-4 border-b-2 border-[#e2e4e7] pt-8 pr-6 pb-6 pl-12">
          <h1 className="flex-1 text-[28px] leading-9 font-medium text-[#25303b]">Routing Agent</h1>
          <PillSelect label="Vehicle" icon={Truck} options={['E-Bike']} />
          <PillSelect label="Region" icon={Globe} options={['San Francisco']} />
        </header>
        <main className="rounded-l-3xl border-2 border-r-0 border-[#e2e4e7] bg-[#f8f9fb] py-12 pr-[26px] pl-12 shadow-sm">
          <h2 className="text-[38px] leading-[60px] font-bold text-[#25303b]">Agent Playground</h2>
          <p className="mt-2 mb-8 text-[26px] leading-[39px] text-[#6e7681]">Chat with the routing agent</p>
          <div className="grid grid-cols-[760px_1fr] gap-8">
            <ChatPanel />
            <div className="h-[1000px] overflow-hidden rounded-2xl border-2 border-[#e2e4e7]">
              <RouteMap />
            </div>
          </div>
        </main>
      </div>
    </div>
  );
}
